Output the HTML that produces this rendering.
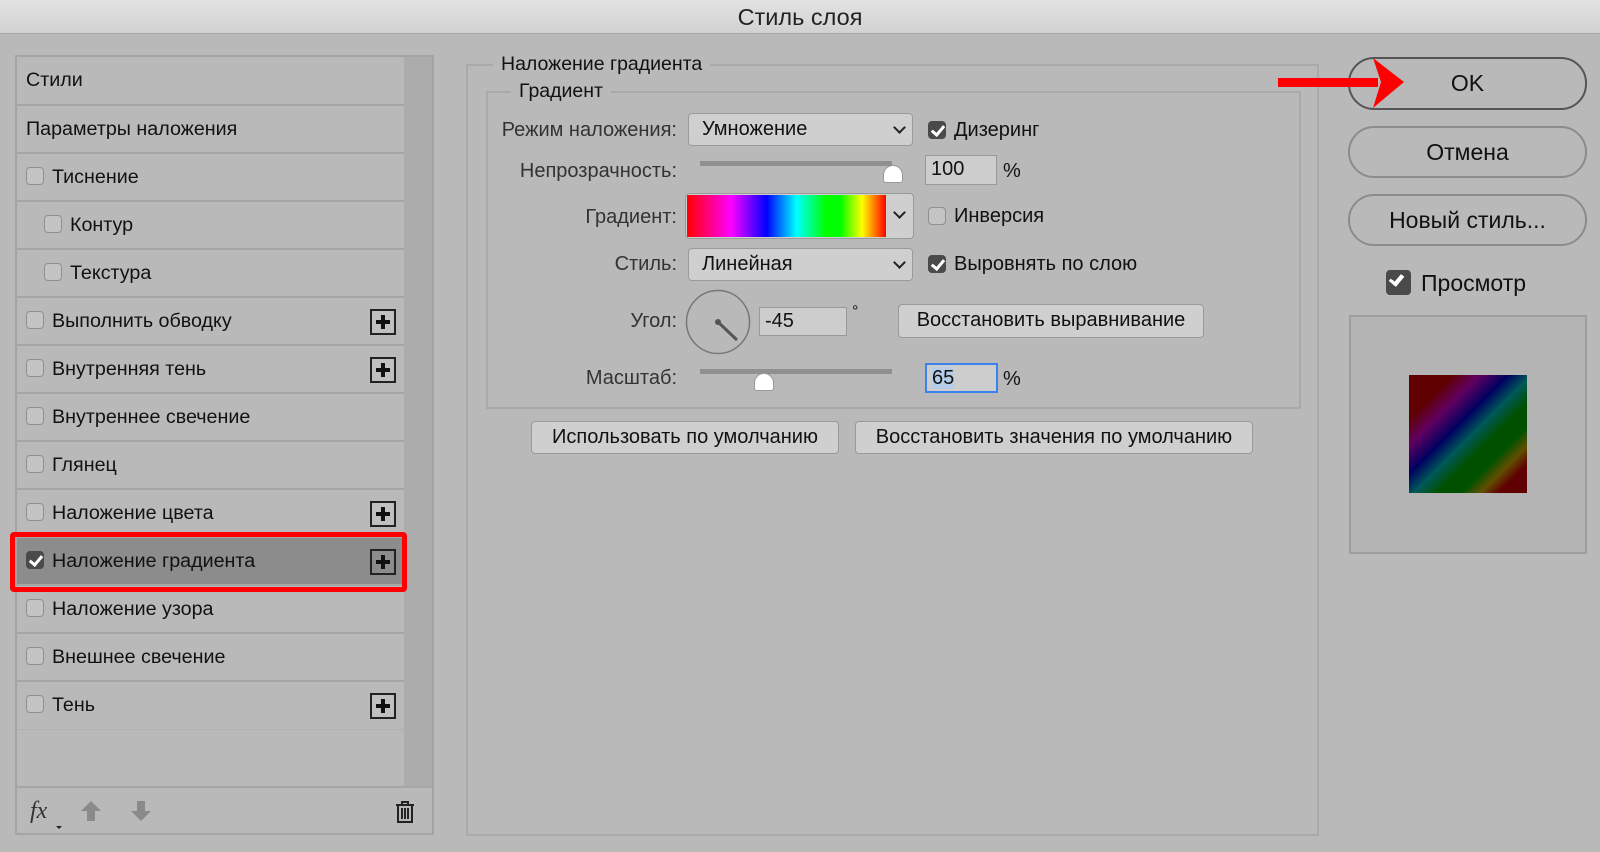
<!DOCTYPE html>
<html><head><meta charset="utf-8"><style>
*{box-sizing:border-box;margin:0;padding:0}
body{width:1600px;height:852px;background:#b9b9b9;font-family:"Liberation Sans","DejaVu Sans",sans-serif;color:#111;position:relative;overflow:hidden;font-size:19.7px}
.a{position:absolute}
.title{left:0;top:0;width:1600px;height:34px;background:linear-gradient(#e2e2e2,#d2d2d2);border-bottom:1px solid #a8a8a8;text-align:center;line-height:34px;font-size:23.5px;color:#222}
.panel{left:15px;top:55px;width:419px;height:780px;border:2px solid #a4a4a4;background:#b9b9b9}
.scroll{left:404px;top:57px;width:28px;height:730px;background:#acacac}
.row{position:absolute;left:17px;width:387px;height:48px;border-bottom:2px solid #a6a6a6;line-height:46px;padding-left:9px}
.cb{position:absolute;width:18px;height:18px;border:1.5px solid #8e8e8e;border-radius:4px;background:#c4c4c4}
.cb.on{background:#4a4a4a;border-color:#4a4a4a}
.cb.on:after{content:"";position:absolute;left:5px;top:1px;width:5px;height:10px;border:solid #fff;border-width:0 3px 3px 0;transform:rotate(40deg)}
.plus{position:absolute;left:353px;top:11px;width:26px;height:26px;border:2px solid #222;background:#c0c0c0}
.plus:before{content:"";position:absolute;left:4px;top:9px;width:14px;height:4px;background:#111}
.plus:after{content:"";position:absolute;left:9px;top:4px;width:4px;height:14px;background:#111}
.grp{border:2px solid #a9a9a9}
.lbl{position:absolute;background:#b9b9b9;padding:0 8px;font-size:19.5px}
.rl{position:absolute;right:923px;font-size:20px;color:#333;text-align:right}
.dd{position:absolute;border:1.5px solid #9a9a9a;border-radius:4px;background:#cfcfcf;font-size:20px;padding-left:13px}
.chev{position:absolute;right:8px;top:9px;width:9px;height:9px;border:solid #222;border-width:0 2px 2px 0;transform:rotate(45deg)}
.inp{position:absolute;border:1.5px solid #999;background:#cdcdcd;font-size:20px;padding-left:5px}
.btn{position:absolute;border:1.5px solid #999;border-radius:4px;background:#cfcfcf;font-size:20px;text-align:center;white-space:nowrap}
.rb{position:absolute;left:1348px;width:239px;border:2px solid #8c8c8c;border-radius:26px;text-align:center;font-size:23px;line-height:48px}
.track{position:absolute;height:5px;background:#909090}
.thumb{position:absolute;width:20px;height:18px;background:#fff;border:1px solid #999;border-radius:10px 10px 3px 3px}
.rt{position:absolute;font-size:20px}
</style></head><body>
<div class="a title">Стиль слоя</div>

<div class="a panel"></div>
<div class="a scroll"></div>
<div class="row" style="top:57px;height:49px">Стили</div>
<div class="row" style="top:106px">Параметры наложения</div>
<div class="row" style="top:154px"><span class="cb" style="left:9px;top:13px"></span><span style="margin-left:26px">Тиснение</span></div>
<div class="row" style="top:202px"><span class="cb" style="left:27px;top:13px"></span><span style="margin-left:44px">Контур</span></div>
<div class="row" style="top:250px"><span class="cb" style="left:27px;top:13px"></span><span style="margin-left:44px">Текстура</span></div>
<div class="row" style="top:298px"><span class="cb" style="left:9px;top:13px"></span><span style="margin-left:26px">Выполнить обводку</span><span class="plus"></span></div>
<div class="row" style="top:346px"><span class="cb" style="left:9px;top:13px"></span><span style="margin-left:26px">Внутренняя тень</span><span class="plus"></span></div>
<div class="row" style="top:394px"><span class="cb" style="left:9px;top:13px"></span><span style="margin-left:26px">Внутреннее свечение</span></div>
<div class="row" style="top:442px"><span class="cb" style="left:9px;top:13px"></span><span style="margin-left:26px">Глянец</span></div>
<div class="row" style="top:490px"><span class="cb" style="left:9px;top:13px"></span><span style="margin-left:26px">Наложение цвета</span><span class="plus"></span></div>
<div class="row" style="top:538px;background:#8c8c8c"><span class="cb on" style="left:9px;top:13px"></span><span style="margin-left:26px">Наложение градиента</span><span class="plus" style="background:#8c8c8c"></span></div>
<div class="row" style="top:586px"><span class="cb" style="left:9px;top:13px"></span><span style="margin-left:26px">Наложение узора</span></div>
<div class="row" style="top:634px"><span class="cb" style="left:9px;top:13px"></span><span style="margin-left:26px">Внешнее свечение</span></div>
<div class="row" style="top:682px;border-bottom:1px solid #b0b0b0"><span class="cb" style="left:9px;top:13px"></span><span style="margin-left:26px">Тень</span><span class="plus"></span></div>
<div class="a" style="left:10px;top:532px;width:397px;height:60px;border:5px solid #f00;border-radius:4px"></div>
<div class="a" style="left:17px;top:786px;width:415px;height:2px;background:#a6a6a6"></div>
<div class="a" style="left:30px;top:798px;font-style:italic;font-size:24px;font-family:'Liberation Serif',serif;color:#333">fx</div>
<div class="a" style="left:56px;top:826px;border:3px solid transparent;border-top:3px solid #222"></div>
<svg class="a" style="left:80px;top:800px" width="22" height="22"><path d="M11 1 L21 11 L15 11 L15 21 L7 21 L7 11 L1 11Z" fill="#8a8a8a"/></svg>
<svg class="a" style="left:130px;top:800px" width="22" height="22"><path d="M11 21 L21 11 L15 11 L15 1 L7 1 L7 11 L1 11Z" fill="#8a8a8a"/></svg>
<svg class="a" style="left:394px;top:800px" width="22" height="24"><path d="M2 5H20M8 5V2H14V5M4 5V22H18V5M8 8V19M11 8V19M14 8V19" stroke="#222" stroke-width="2" fill="none"/></svg>

<div class="a grp" style="left:466px;top:64px;width:853px;height:772px"></div>
<div class="lbl" style="left:493px;top:53px">Наложение градиента</div>
<div class="a grp" style="left:486px;top:91px;width:815px;height:318px"></div>
<div class="lbl" style="left:511px;top:80px">Градиент</div>

<div class="rl" style="top:119px">Режим наложения:</div>
<div class="dd" style="left:688px;top:113px;width:225px;height:33px;line-height:30px">Умножение<span class="chev"></span></div>
<span class="cb on" style="left:928px;top:121px"></span><div class="rt" style="left:954px;top:119px">Дизеринг</div>

<div class="rl" style="top:160px">Непрозрачность:</div>
<div class="track" style="left:700px;top:161px;width:192px"></div>
<div class="thumb" style="left:883px;top:165px"></div>
<div class="inp" style="left:925px;top:155px;width:72px;height:30px;line-height:27px">100</div>
<div class="rt" style="left:1003px;top:160px">%</div>

<div class="rl" style="top:206px">Градиент:</div>
<div class="a" style="left:685px;top:193px;width:229px;height:46px;border:1.5px solid #999;border-radius:4px;background:#cfcfcf"></div>
<div class="a" style="left:687px;top:195px;width:199px;height:42px;background:linear-gradient(90deg,#f00 0%,#f0f 22%,#00f 40%,#0ff 55%,#0f0 70%,#0f0 77%,#ff0 88%,#f00 100%)"></div>
<span class="chev" style="position:absolute;left:895px;top:208px"></span>
<span class="cb" style="left:928px;top:207px"></span><div class="rt" style="left:954px;top:205px">Инверсия</div>

<div class="rl" style="top:253px">Стиль:</div>
<div class="dd" style="left:688px;top:248px;width:225px;height:33px;line-height:30px">Линейная<span class="chev"></span></div>
<span class="cb on" style="left:928px;top:255px"></span><div class="rt" style="left:954px;top:253px">Выровнять по слою</div>

<div class="rl" style="top:310px">Угол:</div>
<svg class="a" style="left:685px;top:289px" width="66" height="66"><circle cx="33" cy="33" r="31.5" fill="none" stroke="#777" stroke-width="1.5"/><circle cx="33" cy="33" r="3" fill="#555"/><path d="M33 33 L52 51" stroke="#555" stroke-width="3"/></svg>
<div class="inp" style="left:759px;top:307px;width:88px;height:29px;line-height:27px">-45</div>
<div class="rt" style="left:852px;top:303px;font-size:16px">°</div>
<div class="btn" style="left:898px;top:304px;width:306px;height:34px;line-height:31px">Восстановить выравнивание</div>

<div class="rl" style="top:367px">Масштаб:</div>
<div class="track" style="left:700px;top:369px;width:192px"></div>
<div class="thumb" style="left:754px;top:373px"></div>
<div class="inp" style="left:925px;top:363px;width:73px;height:30px;line-height:27px;border:2px solid #3b82f0"><span style="background:#b5cde8">65</span></div>
<div class="rt" style="left:1003px;top:368px">%</div>

<div class="btn" style="left:531px;top:421px;width:308px;height:33px;line-height:30px">Использовать по умолчанию</div>
<div class="btn" style="left:855px;top:421px;width:398px;height:33px;line-height:30px">Восстановить значения по умолчанию</div>

<div class="rb" style="top:57px;height:53px;border-color:#555">OK</div>
<div class="rb" style="top:126px;height:52px">Отмена</div>
<div class="rb" style="top:194px;height:52px">Новый стиль...</div>
<span class="cb on" style="left:1386px;top:270px;width:25px;height:25px"></span>
<span style="position:absolute;left:1394px;top:273px;width:7px;height:13px;border:solid #fff;border-width:0 3px 3px 0;transform:rotate(40deg)"></span>
<div class="rt" style="left:1421px;top:270px;font-size:23px">Просмотр</div>
<div class="a" style="left:1349px;top:315px;width:238px;height:239px;border:2px solid #9e9e9e;background:#b4b4b4"></div>
<div class="a" style="left:1409px;top:375px;width:118px;height:118px;background:linear-gradient(135deg,#600000 0%,#600000 18%,#600060 30%,#000060 42%,#005858 52%,#005000 62%,#005000 72%,#605000 80%,#600000 88%,#600000 100%)"></div>

<svg class="a" style="left:1276px;top:56px" width="130" height="54"><rect x="2" y="22" width="100" height="9" fill="#f00"/><path d="M97 2 L128 26 L97 52 L105 26Z" fill="#f00"/></svg>
</body></html>
